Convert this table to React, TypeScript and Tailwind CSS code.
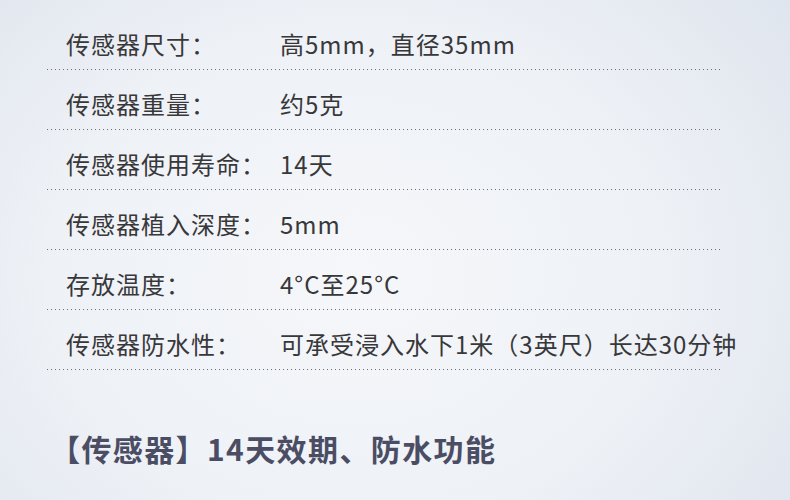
const specs = [
  { label: '传感器尺寸：', value: '高5mm，直径35mm' },
  { label: '传感器重量：', value: '约5克' },
  { label: '传感器使用寿命：', value: '14天' },
  { label: '传感器植入深度：', value: '5mm' },
  { label: '存放温度：', value: '4°C至25°C' },
  { label: '传感器防水性：', value: '可承受浸入水下1米（3英尺）长达30分钟' },
];

export default function App() {
  return (
    <div
      className="w-[790px] h-[500px] overflow-hidden bg-[radial-gradient(ellipse_70%_90%_at_45%_55%,#f5f7fa_0%,#eef1f6_55%,#dfe5ee_100%)]"
      style={{ fontFamily: '"Noto Sans CJK SC", "Noto Sans", sans-serif' }}
    >
      <div className="pt-[10px] pl-[47px] w-[723px]">
        {specs.map((s) => (
          <div key={s.label} className="pt-[19px]">
            <div className="flex h-[30px] items-center text-[24px] leading-[30px] tracking-[1px] text-[#38383a]">
              <span className="w-[233px] pl-[19px] shrink-0">{s.label}</span>
              <span className="whitespace-nowrap">{s.value}</span>
            </div>
            <div className="mt-[10px] h-px bg-[linear-gradient(to_right,#6b6f78_1px,transparent_1px)] bg-[length:4px_1px]" />
          </div>
        ))}
      </div>
      <div className="pl-[50px] pt-[58px] text-[30px] leading-[40px] tracking-[1.4px] font-bold text-[#4a4d63]">
        【传感器】14天效期、防水功能
      </div>
    </div>
  );
}
